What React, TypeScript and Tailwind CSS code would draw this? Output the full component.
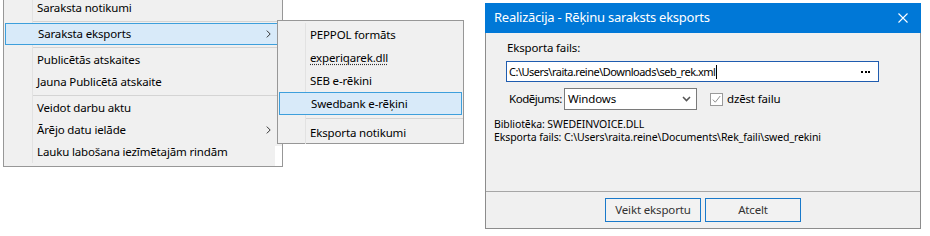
import React from 'react';

const font = "font-['Noto_Sans',sans-serif]";

function Arrow() {
    return (
        <svg width="5" height="8" viewBox="0 0 5 8" className="shrink-0">
            <path d="M0.8 0.6 L4.2 4 L0.8 7.4" stroke="#333" strokeWidth="1" fill="none" />
        </svg>
    );
}

type Item = { label: string; arrow?: boolean; active?: boolean; dotted?: boolean } | 'sep';

const mainItems: Item[] = [
    { label: 'Saraksta notikumi' },
    'sep',
    { label: 'Saraksta eksports', arrow: true, active: true },
    'sep',
    { label: 'Publicētās atskaites' },
    { label: 'Jauna Publicētā atskaite' },
    'sep',
    { label: 'Veidot darbu aktu' },
    { label: 'Ārējo datu ielāde', arrow: true },
    { label: 'Lauku labošana iezīmētajām rindām' },
];

const subItems: Item[] = [
    { label: 'PEPPOL formāts' },
    { label: 'experiqarek.dll', dotted: true },
    { label: 'SEB e-rēkini' },
    { label: 'Swedbank e-rēķini', active: true },
    'sep',
    { label: 'Eksporta notikumi' },
];

function MenuRows({ items, gutter, rowH, sepH }: { items: Item[]; gutter: number; rowH: string; sepH: string }) {
    return (
        <>
            {items.map((it, i) => {
                if (it === 'sep') {
                    return (
                        <div key={i} className={`flex ${sepH}`}>
                            <div className="shrink-0 border-r border-[#e2e2e2]" style={{ width: gutter }} />
                            <div className="flex-1 flex items-center">
                                <div className="w-full h-px bg-[#d4d4d4]" />
                            </div>
                        </div>
                    );
                }
                if (it.active) {
                    return (
                        <div key={i} className={`flex items-center ${rowH} mx-[1px] border border-[#3d9fdc] bg-[#d8eaf9] pr-[9px]`}>
                            <span className="flex-1" style={{ paddingLeft: gutter + 3 }}>{it.label}</span>
                            {it.arrow && <Arrow />}
                        </div>
                    );
                }
                return (
                    <div key={i} className={`flex items-center ${rowH}`}>
                        <div className="shrink-0 self-stretch border-r border-[#e2e2e2]" style={{ width: gutter }} />
                        <span className={`flex-1 pl-[4px] ${it.dotted ? 'underline decoration-dotted decoration-[#333] underline-offset-[2px]' : ''}`}>
                            {it.label}
                        </span>
                        {it.arrow && <span className="pr-[11px]"><Arrow /></span>}
                    </div>
                );
            })}
        </>
    );
}

export default function App() {
    return (
        <div className={`relative w-[930px] h-[236px] bg-white overflow-hidden text-[11.5px] tracking-[-0.15px] text-black ${font}`}>
            {/* main context menu */}
            <div className="absolute left-[3px] top-[-5px] w-[280px] border border-[#979797] bg-[#f0f0f0] pt-[1px] pb-[3px] leading-none">
                <MenuRows items={mainItems} gutter={29} rowH="h-[22px]" sepH="h-[4px]" />
            </div>

            {/* submenu */}
            <div className="absolute left-[277px] top-[20px] w-[187px] h-[124px] border border-[#979797] bg-[#f0f0f0] pt-[2px] leading-none">
                <MenuRows items={subItems} gutter={28} rowH="h-[23px]" sepH="h-[6px]" />
            </div>
            <div className="absolute left-[275px] top-[146px] w-[7px] h-[20px] bg-white" />

            {/* dialog */}
            <div className="absolute left-[485px] top-[3px] w-[436px] flex flex-col">
                <div className="h-[30px] bg-[#0078d7] flex items-center pl-[9px] pr-[13px] text-white text-[13px] tracking-[-0.25px]">
                    <span className="flex-1">Realizācija - Rēķinu saraksts eksports</span>
                    <svg width="10" height="10" viewBox="0 0 10 10">
                        <path d="M0.5 0.5 L9.5 9.5 M9.5 0.5 L0.5 9.5" stroke="#fff" strokeWidth="1.1" />
                    </svg>
                </div>
                <div className="border-x border-b border-[#8c8c8c] bg-[#f0f0f0] flex flex-col">
                    <div className="h-[159px] border-b border-[#a6a6a6] pt-[7px]">
                        <div className="pl-[21px] h-[16px] leading-[16px]">Eksporta fails:</div>
                        <div className="ml-[20px] mt-[5px] w-[373px] h-[21px] border border-[#1f5caf] bg-white flex items-center pl-[2px] pr-[8px]">
                            <span className="leading-none text-[11px] tracking-[-0.5px]">{'C:\\Users\\raita.reine\\Downloads\\seb_rek.xml'}</span>
                            <span className="ml-[1px] w-px h-[14px] bg-black" />
                            <span className="flex-1" />
                            <span className="flex gap-[1.5px]">
                                <span className="w-[2px] h-[2px] bg-black" />
                                <span className="w-[2px] h-[2px] bg-black" />
                                <span className="w-[2px] h-[2px] bg-black" />
                            </span>
                        </div>
                        <div className="mt-[6px] h-[22px] flex items-center">
                            <span className="ml-[23px] w-[55px] tracking-[-0.45px]">Kodējums:</span>
                            <div className="w-[133px] h-[22px] border border-[#7a7a7a] bg-white flex items-center pl-[3px] pr-[5px]">
                                <span className="flex-1">Windows</span>
                                <svg width="9" height="6" viewBox="0 0 9 6">
                                    <path d="M1 1 L4.5 4.6 L8 1" stroke="#555" strokeWidth="1.5" fill="none" />
                                </svg>
                            </div>
                            <div className="ml-[13px] w-[13px] h-[13px] border border-[#9a9a9a] bg-white flex items-center justify-center">
                                <svg width="11" height="11" viewBox="0 0 11 11">
                                    <path d="M1.8 5.6 L4.3 8.2 L9.2 2" stroke="#8f8f8f" strokeWidth="1" fill="none" />
                                </svg>
                            </div>
                            <span className="ml-[4px]">dzēst failu</span>
                        </div>
                        <div className="mt-[8px] pl-[8px] text-[10.5px] tracking-[-0.1px] leading-[13px]">
                            <div>Bibliotēka: SWEDEINVOICE.DLL</div>
                            <div>{'Eksporta fails: C:\\Users\\raita.reine\\Documents\\Rek_faili\\swed_rekini'}</div>
                        </div>
                    </div>
                    <div className="h-[36px] flex justify-center items-start pt-[6px] gap-[4px]">
                        <button className="w-[96px] h-[24px] border border-[#1979ca] bg-[#f2f2f2] text-[#333]">
                            Veikt eksportu
                        </button>
                        <button className="w-[96px] h-[24px] border border-[#1979ca] bg-[#f2f2f2] text-[#333]">
                            Atcelt
                        </button>
                    </div>
                </div>
            </div>
        </div>
    );
}
